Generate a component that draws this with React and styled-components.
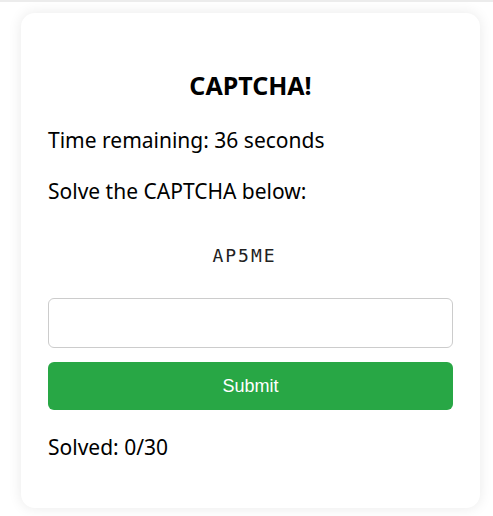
import React, { useState } from "react"
import styled, { createGlobalStyle } from "styled-components"

const GlobalStyle = createGlobalStyle`
  html, body {
    margin: 0;
    padding: 0;
    background: #ffffff;
    font-family: "Malgun Gothic", "Noto Sans", "Open Sans", sans-serif;
  }
`

const Page = styled.div`
  min-height: 516px;
  border-top: 2px solid #ececec;
  box-sizing: border-box;
  padding-top: 11px;
`

const Card = styled.div`
  width: 459px;
  margin-left: 21px;
  box-sizing: border-box;
  padding: 57px 27px 47px;
  background: #fff;
  border-radius: 14px;
  box-shadow: 0 0 14px rgba(0, 0, 0, 0.09);
  display: flex;
  flex-direction: column;
`

const Title = styled.h2`
  margin: 0 0 26px;
  font-size: 25px;
  line-height: 30px;
  font-weight: 700;
  text-align: center;
  color: #000;
`

const Line = styled.p`
  margin: 0 0 ${(p) => p.gap || 0}px;
  font-size: 21px;
  line-height: 28px;
  color: #000;
`

const Code = styled.div`
  margin: 0 0 28px;
  padding-right: 12px;
  text-align: center;
  font-family: "DejaVu Sans Mono", "Liberation Mono", monospace;
  font-size: 18px;
  line-height: 28px;
  letter-spacing: 2px;
  color: #222;
`

const Input = styled.input`
  box-sizing: border-box;
  width: 100%;
  height: 50px;
  margin: 0 0 14px;
  padding: 0 12px;
  border: 1px solid #cccccc;
  border-radius: 6px;
  font-size: 18px;
  outline: none;
`

const SubmitButton = styled.button`
  height: 48px;
  width: 100%;
  margin: 0 0 23px;
  border: none;
  border-radius: 6px;
  background: #28a745;
  color: #fff;
  font-family: "Liberation Sans", Arial, sans-serif;
  font-size: 18px;
  cursor: pointer;
`

export default function App() {
  const [answer, setAnswer] = useState("")
  return (
    <>
      <GlobalStyle />
      <Page>
        <Card>
          <Title>CAPTCHA!</Title>
          <Line gap={23}>Time remaining: 36 seconds</Line>
          <Line gap={37}>Solve the CAPTCHA below:</Line>
          <Code>AP5ME</Code>
          <Input value={answer} onChange={(e) => setAnswer(e.target.value)} />
          <SubmitButton>Submit</SubmitButton>
          <Line>Solved: 0/30</Line>
        </Card>
      </Page>
    </>
  )
}
